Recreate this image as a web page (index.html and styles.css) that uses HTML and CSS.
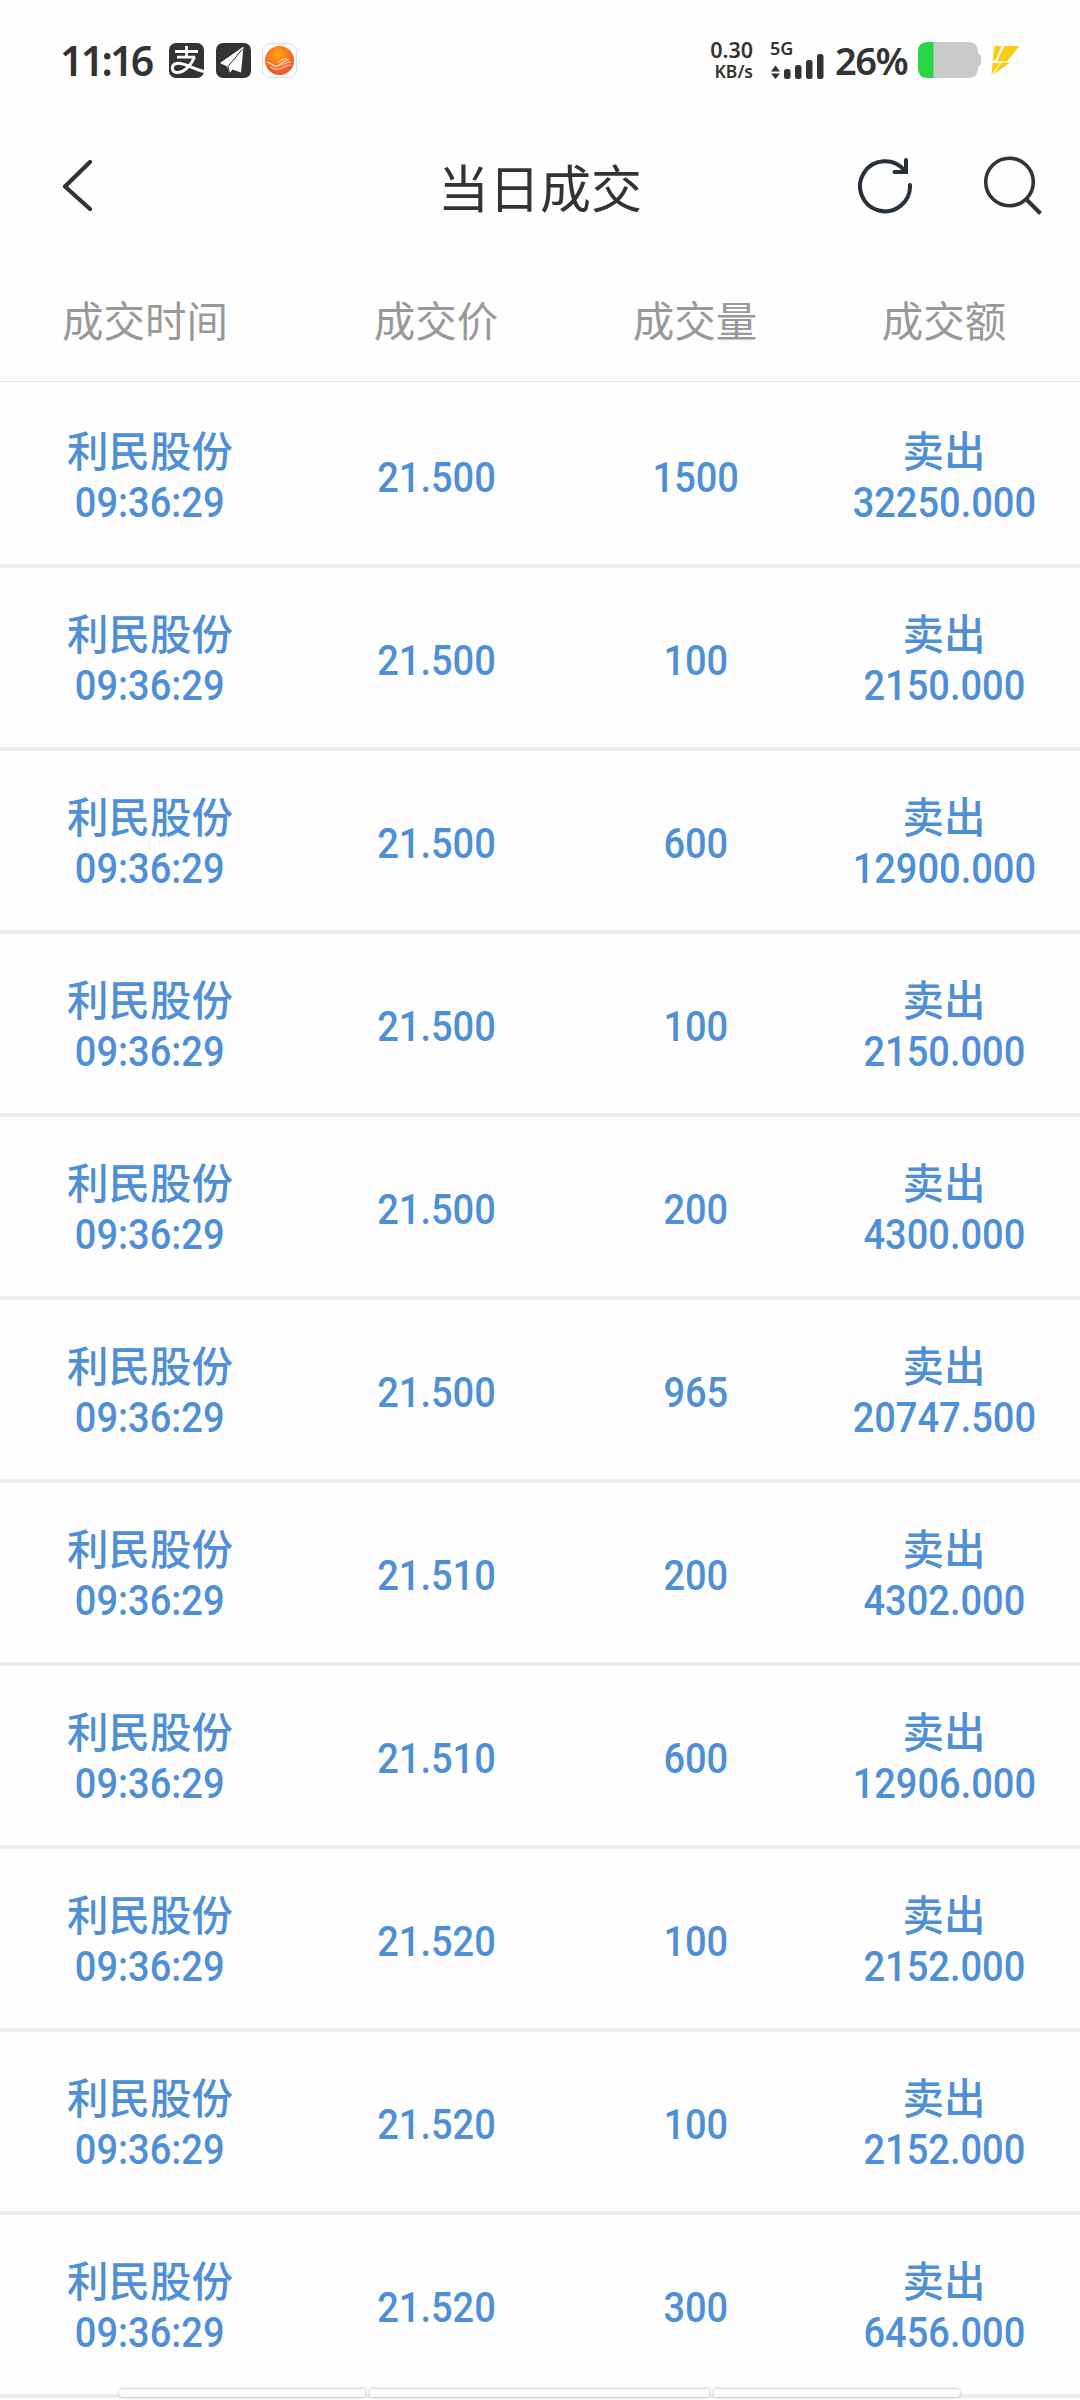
FILE: index.html
```html
<!DOCTYPE html>
<html lang="zh-CN">
<head>
    <meta charset="UTF-8">
    <meta name="viewport" content="width=device-width, initial-scale=1.0">
    <title>当日成交</title>

    <link rel="stylesheet" href="styles.css">
</head>
<body>
    <div class="status-bar">
        <span class="clock">11:16</span>
        <div class="app-icons">
            <svg width="35" height="35" viewBox="0 0 35 35">
                <rect width="35" height="35" rx="7" fill="#333"/>
                <g fill="none" stroke="#fff">
                    <path d="M6 8.500H29M17.500 3V14M8 14.200H26" stroke-width="2.800"/>
                    <path d="M25.500 14C23 20 17 29 9 29.500C2 29.500 1.500 22 7.500 20.500C14 19 22 25 35 28.500" stroke-width="3"/>
                </g>
            </svg>
            <svg width="35" height="35" viewBox="0 0 35 35">
                <rect width="35" height="35" rx="7" fill="#333"/>
                <path d="M27.500 3.500L4 20L11 23.500L13.500 30.500L16.500 26.500L25 29.500Z" fill="#fff"/>
                <path d="M26.500 6L12 23.500L13.500 30" fill="none" stroke="#333" stroke-width="1"/>
            </svg>
            <svg width="35" height="35" viewBox="0 0 35 35">
                <defs>
                    <radialGradient id="sun" cx="0.45" cy="0.3" r="0.65">
                        <stop offset="0" stop-color="#ffa30a"/>
                        <stop offset="1" stop-color="#f2542d"/>
                    </radialGradient>
                </defs>
                <rect x="0.5" y="0.5" width="34" height="34" rx="8" fill="#fff" stroke="#ddd"/>
                <circle cx="17.500" cy="17.500" r="14.500" fill="url(#sun)"/>
                <g fill="none" stroke="#fff" stroke-opacity="0.85">
                    <path d="M5 19C9 20 11 24 16 23C20 21 21 17 27 16.500" stroke-width="1.200"/>
                    <path d="M8 23.500C13 28 19 26 23 23.500C25 22.500 27 22 29 22M20 22.500C23 20 25 19 29 19M16 20C19 17 21 15.500 25 15.500" stroke-width="0.900"/>
                </g>
            </svg>
        </div>
        <div class="net-speed">
            <span class="speed">0.30</span>
            <span class="unit">KB/s</span>
        </div>
        <div class="signal">
            <span class="network">5G</span>
            <svg width="54" height="26" viewBox="0 0 54 26">
                <g fill="#333">
                    <path d="M1 18.500L5.500 12.500L10 18.500ZM1 20.500H10L5.500 26Z"/>
                    <rect x="14" y="16" width="6.500" height="10" rx="2.500"/>
                    <rect x="25" y="12" width="6.500" height="14" rx="2.500"/>
                    <rect x="36" y="7" width="6.500" height="19" rx="2.500"/>
                    <rect x="47" y="1" width="6.500" height="25" rx="2.500"/>
                </g>
            </svg>
        </div>
        <span class="battery-level">26%</span>
        <svg class="battery" width="63" height="36" viewBox="0 0 63 36">
            <path d="M10 0H50Q60 0 60 10V26Q60 36 50 36H10Q0 36 0 26V10Q0 0 10 0Z" fill="#cacaca"/>
            <path d="M59 11Q63 12 63 15V21Q63 24 59 25Z" fill="#cacaca"/>
            <path d="M15.500 0H10Q0 0 0 10V26Q0 36 10 36H15.500Z" fill="#2bd645"/>
        </svg>
        <svg class="bolt" width="30" height="31" viewBox="0 0 30 31">
            <path d="M4.500 1H11.500L5.500 15.500H2.500ZM14.500 1H29.500L17 16.500H7ZM2.500 18H10L1.500 30ZM11.500 17.500H20L3 30Z" fill="#fbcc14"/>
        </svg>
    </div>

    <div class="nav-bar">
        <svg class="back" width="30" height="52" viewBox="0 0 30 52">
            <path d="M28 2L3 26.500L28 49" fill="none" stroke="#333" stroke-width="4.200" stroke-linecap="round" stroke-linejoin="round"/>
        </svg>
        <h1>当日成交</h1>
        <div class="actions">
            <svg width="56" height="56" viewBox="0 0 56 56">
                <g fill="none" stroke="#28303d" stroke-width="4" stroke-linecap="round">
                    <path d="M52 27A25 25 0 1 1 46 12"/>
                    <path d="M48 2V14H36.500"/>
                </g>
            </svg>
            <svg width="60" height="60" viewBox="0 0 60 60">
                <g fill="none" stroke="#333" stroke-width="3.600">
                    <circle cx="26.500" cy="26" r="23.800"/>
                    <path d="M43 43L57.500 57.500" stroke-width="4"/>
                </g>
            </svg>
        </div>
    </div>

    <div class="table-head">
        <span>成交时间</span>
        <span>成交价</span>
        <span>成交量</span>
        <span>成交额</span>
    </div>

    <div class="deal-list">
        <div class="deal">
            <div class="cell"><span>利民股份</span><span class="num">09:36:29</span></div>
            <div class="cell"><span class="num">21.500</span></div>
            <div class="cell"><span class="num">1500</span></div>
            <div class="cell"><span>卖出</span><span class="num">32250.000</span></div>
        </div>
        <div class="deal">
            <div class="cell"><span>利民股份</span><span class="num">09:36:29</span></div>
            <div class="cell"><span class="num">21.500</span></div>
            <div class="cell"><span class="num">100</span></div>
            <div class="cell"><span>卖出</span><span class="num">2150.000</span></div>
        </div>
        <div class="deal">
            <div class="cell"><span>利民股份</span><span class="num">09:36:29</span></div>
            <div class="cell"><span class="num">21.500</span></div>
            <div class="cell"><span class="num">600</span></div>
            <div class="cell"><span>卖出</span><span class="num">12900.000</span></div>
        </div>
        <div class="deal">
            <div class="cell"><span>利民股份</span><span class="num">09:36:29</span></div>
            <div class="cell"><span class="num">21.500</span></div>
            <div class="cell"><span class="num">100</span></div>
            <div class="cell"><span>卖出</span><span class="num">2150.000</span></div>
        </div>
        <div class="deal">
            <div class="cell"><span>利民股份</span><span class="num">09:36:29</span></div>
            <div class="cell"><span class="num">21.500</span></div>
            <div class="cell"><span class="num">200</span></div>
            <div class="cell"><span>卖出</span><span class="num">4300.000</span></div>
        </div>
        <div class="deal">
            <div class="cell"><span>利民股份</span><span class="num">09:36:29</span></div>
            <div class="cell"><span class="num">21.500</span></div>
            <div class="cell"><span class="num">965</span></div>
            <div class="cell"><span>卖出</span><span class="num">20747.500</span></div>
        </div>
        <div class="deal">
            <div class="cell"><span>利民股份</span><span class="num">09:36:29</span></div>
            <div class="cell"><span class="num">21.510</span></div>
            <div class="cell"><span class="num">200</span></div>
            <div class="cell"><span>卖出</span><span class="num">4302.000</span></div>
        </div>
        <div class="deal">
            <div class="cell"><span>利民股份</span><span class="num">09:36:29</span></div>
            <div class="cell"><span class="num">21.510</span></div>
            <div class="cell"><span class="num">600</span></div>
            <div class="cell"><span>卖出</span><span class="num">12906.000</span></div>
        </div>
        <div class="deal">
            <div class="cell"><span>利民股份</span><span class="num">09:36:29</span></div>
            <div class="cell"><span class="num">21.520</span></div>
            <div class="cell"><span class="num">100</span></div>
            <div class="cell"><span>卖出</span><span class="num">2152.000</span></div>
        </div>
        <div class="deal">
            <div class="cell"><span>利民股份</span><span class="num">09:36:29</span></div>
            <div class="cell"><span class="num">21.520</span></div>
            <div class="cell"><span class="num">100</span></div>
            <div class="cell"><span>卖出</span><span class="num">2152.000</span></div>
        </div>
        <div class="deal">
            <div class="cell"><span>利民股份</span><span class="num">09:36:29</span></div>
            <div class="cell"><span class="num">21.520</span></div>
            <div class="cell"><span class="num">300</span></div>
            <div class="cell"><span>卖出</span><span class="num">6456.000</span></div>
        </div>
    </div>

    <div class="gesture-bar">
        <span></span>
        <span></span>
        <span></span>
    </div>
</body>
</html>
```
FILE: styles.css
```css
* {
    margin: 0;
    padding: 0;
    box-sizing: border-box;
}

body {
    position: relative;
    width: 1080px;
    height: 2400px;
    overflow: hidden;
    font-family: "Noto Sans CJK SC", sans-serif;
    background: #fefefe;
    color: #333;
}

svg {
    display: block;
    flex: none;
}

/* status bar */
.status-bar {
    display: flex;
    align-items: center;
    height: 120px;
    padding-left: 60px;
    font-family: "Noto Sans", sans-serif;
    font-weight: 600;
    white-space: nowrap;
}

.clock {
    width: 109px;
    font-size: 41px;
    letter-spacing: -2.7px;
}

.app-icons {
    display: flex;
    gap: 11.5px;
    width: 539px;
}

.net-speed {
    display: flex;
    flex-direction: column;
    align-items: flex-end;
    width: 45px;
}

.speed {
    font-size: 21.5px;
    line-height: 22px;
}

.unit {
    font-size: 17.5px;
    line-height: 20px;
}

.signal {
    width: 54px;
    margin-left: 17px;
    padding-top: 2px;
}

.network {
    display: block;
    height: 10px;
    font-size: 18px;
    line-height: 11px;
}

.battery-level {
    width: 83px;
    margin-left: 11px;
    font-size: 38px;
    letter-spacing: -1.5px;
}

.bolt {
    margin-left: 9px;
}

/* title */
.nav-bar {
    display: grid;
    grid-template-columns: 300px 480px 300px;
    align-items: center;
    height: 132px;
}

.nav-bar .back {
    margin-left: 62px;
}

.nav-bar h1 {
    font-size: 51px;
    font-weight: 400;
    text-align: center;
}

.actions {
    display: flex;
    align-items: center;
    gap: 69px;
    padding-left: 78px;
}

/* table */
.table-head,
.deal {
    display: grid;
    grid-template-columns: 300px 274px 244px 252px;
    align-items: center;
    text-align: center;
}

.table-head {
    height: 130px;
    margin-bottom: 3px;
    padding-top: 4px;
    font-size: 41.5px;
    color: #999;
    border-bottom: 1px solid #e6e6e6;
}

.table-head span {
    padding-right: 2px;
}

.table-head span:first-child {
    padding-right: 10px;
}

.table-head span:last-child {
    padding-right: 0;
}

.deal {
    height: 183px;
    font-size: 41.5px;
    font-weight: 500;
    color: #4f8fd6;
    border-bottom: 4px solid #ededed;
}

.cell {
    display: flex;
    flex-direction: column;
    align-items: center;
    line-height: 51px;
}

.num {
    font-family: Roboto, "Noto Sans", sans-serif;
    font-size: 42px;
    transform: translateY(2px) scaleX(0.905);
}

.num:first-child {
    padding-top: 2px;
}

/* bottom handle over the list */
.gesture-bar {
    position: absolute;
    left: 119px;
    bottom: 3px;
    display: grid;
    grid-template-columns: 246px 339px 246px;
    gap: 5px;
    height: 8px;
}

.gesture-bar span {
    background: rgba(255, 255, 255, 0.85);
    box-shadow: 0 0 3px rgba(0, 0, 0, 0.35);
}

.gesture-bar span:first-child {
    border-radius: 4px 0 0 4px;
}

.gesture-bar span:last-child {
    border-radius: 0 4px 4px 0;
}
```
